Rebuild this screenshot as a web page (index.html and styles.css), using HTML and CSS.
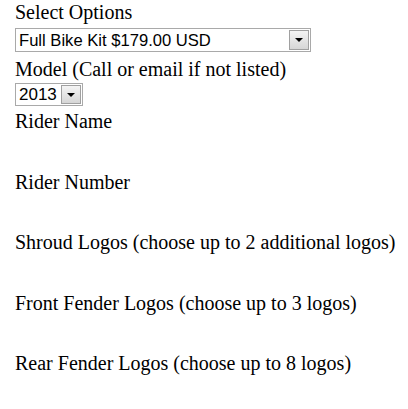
FILE: index.html
```html
<!DOCTYPE html>
<html lang="en">
<head>
    <meta charset="UTF-8">
    <title>Bike Kit Options</title>
    <link rel="stylesheet" href="styles.css">
</head>
<body>
    <form class="options">
        <label class="opt-label">Select Options</label>
        <div class="dropdown dropdown-wide">
            <select>
                <option>Full Bike Kit $179.00 USD</option>
            </select>
            <span class="dropdown-btn"><span class="arrow"></span></span>
        </div>
        <label class="opt-label">Model (Call or email if not listed)</label>
        <div class="dropdown dropdown-small">
            <select>
                <option>2013</option>
            </select>
            <span class="dropdown-btn"><span class="arrow"></span></span>
        </div>
        <label class="opt-label">Rider Name</label>
        <div class="spacer"></div>
        <label class="opt-label">Rider Number</label>
        <div class="spacer"></div>
        <label class="opt-label">Shroud Logos (choose up to 2 additional logos)</label>
        <div class="spacer"></div>
        <label class="opt-label">Front Fender Logos (choose up to 3 logos)</label>
        <div class="spacer"></div>
        <label class="opt-label">Rear Fender Logos (choose up to 8 logos)</label>
    </form>
</body>
</html>
```

FILE: styles.css
```css
* {
    margin: 0;
    padding: 0;
    box-sizing: border-box;
}

body {
    background-color: #fff;
    color: #000;
    font-family: "Liberation Serif", "Times New Roman", serif;
    font-size: 20px;
}

.options {
    padding: 1px 0 1px 15px;
}

.opt-label {
    display: block;
    line-height: 23px;
    white-space: nowrap;
}

.dropdown {
    display: flex;
    align-items: center;
    border: 1px solid #a9a9a9;
    background: #fff;
    padding: 1px 1px 1px 0;
}

.dropdown-wide {
    width: 296px;
    height: 24px;
    margin: 4px 0 6px;
}

.dropdown-small {
    width: 68px;
    height: 23px;
    margin: 2px 0 4px;
}

.dropdown select {
    appearance: none;
    -webkit-appearance: none;
    border: none;
    outline: none;
    background: transparent;
    flex: 1;
    min-width: 0;
    font-family: "Liberation Sans", Arial, sans-serif;
    font-size: 16.6px;
    color: #000;
    padding: 0 3px;
    height: 20px;
}

.dropdown-small select {
    font-size: 17px;
}

.dropdown-btn {
    width: 20px;
    height: 20px;
    border: 1px solid #a0a0a0;
    background: linear-gradient(#f4f4f4, #d6d6d6);
    display: flex;
    align-items: center;
    justify-content: center;
}

.dropdown-small .dropdown-btn {
    height: 19px;
}

.arrow {
    width: 0;
    height: 0;
    border-left: 4px solid transparent;
    border-right: 4px solid transparent;
    border-top: 4px solid #000;
}

.spacer {
    height: 37.5px;
}
```
